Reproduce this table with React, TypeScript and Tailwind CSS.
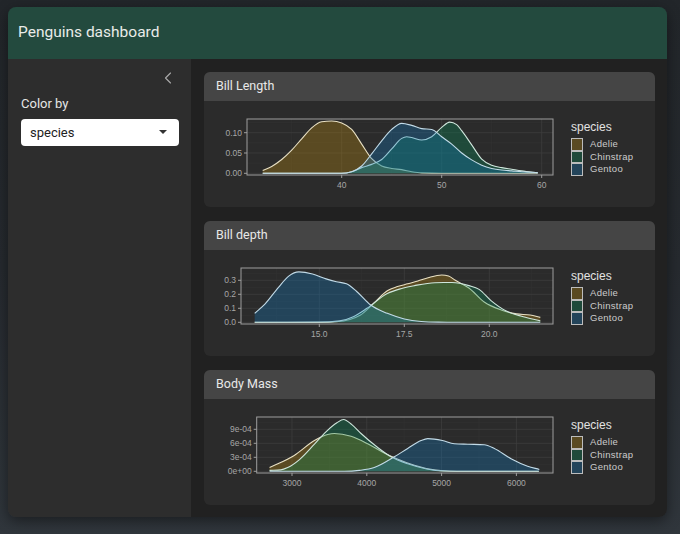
import React from "react";
import { ChevronLeft } from "lucide-react";

type Pt = [number, number];

const SPECIES = [
  { name: "Adelie", fill: "#c8930d", line: "#e8e0c4", key: "#5a4a22" },
  { name: "Chinstrap", fill: "#03935d", line: "#cfe6dc", key: "#1f4a3a" },
  { name: "Gentoo", fill: "#117fc8", line: "#c2dbe8", key: "#23445a" },
];

// monotone cubic through pixel points (no overshoot below the baseline)
function monotonePath(pts: Pt[]): string {
  const n = pts.length;
  const h: number[] = [];
  const s: number[] = [];
  for (let i = 0; i < n - 1; i++) {
    h.push(pts[i + 1][0] - pts[i][0]);
    s.push((pts[i + 1][1] - pts[i][1]) / h[i]);
  }
  const t: number[] = [];
  for (let i = 0; i < n; i++) {
    if (i === 0) t.push(s[0]);
    else if (i === n - 1) t.push(s[n - 2]);
    else {
      const s0 = s[i - 1];
      const s1 = s[i];
      if (s0 * s1 <= 0) t.push(0);
      else {
        const p = (s0 * h[i] + s1 * h[i - 1]) / (h[i - 1] + h[i]);
        t.push((Math.sign(s0) + Math.sign(s1)) * Math.min(Math.abs(s0), Math.abs(s1), 0.5 * Math.abs(p)));
      }
    }
  }
  let d = `M${pts[0][0].toFixed(2)},${pts[0][1].toFixed(2)}`;
  for (let i = 0; i < n - 1; i++) {
    const [x0, y0] = pts[i];
    const [x1, y1] = pts[i + 1];
    const k = h[i] / 3;
    d += ` C${(x0 + k).toFixed(2)},${(y0 + t[i] * k).toFixed(2)} ${(x1 - k).toFixed(2)},${(y1 - t[i + 1] * k).toFixed(2)} ${x1.toFixed(2)},${y1.toFixed(2)}`;
  }
  return d;
}

type PlotDef = {
  title: string;
  left: number;
  x0: number;
  xPx: number;
  xScale: number;
  yScale: number;
  xTicks: [number, string][];
  yTicks: [number, string][];
  xMinor: number[];
  yMinor: number[];
  curves: Pt[][];
};

const PLOTS: PlotDef[] = [
  {
    title: "Bill Length",
    left: 43,
    x0: 40,
    xPx: 137.7,
    xScale: 10,
    yScale: 406,
    xTicks: [[40, "40"], [50, "50"], [60, "60"]],
    yTicks: [[0, "0.00"], [0.05, "0.05"], [0.1, "0.10"]],
    xMinor: [35, 45, 55],
    yMinor: [0.025, 0.075, 0.125],
    curves: [
      [[32.1, 0.007], [33, 0.017], [34, 0.034], [35, 0.057], [36, 0.085], [37, 0.112], [38, 0.127], [39, 0.129], [40, 0.124], [41, 0.108], [42, 0.072], [43, 0.036], [44, 0.018], [45, 0.012], [46, 0.009], [47, 0.004], [48, 0.001], [50, 0], [59.6, 0]],
      [[32.1, 0], [40, 0], [41, 0.004], [42, 0.014], [43, 0.022], [44, 0.034], [45, 0.06], [46, 0.086], [46.5, 0.09], [47, 0.088], [48, 0.082], [49, 0.09], [50, 0.113], [50.8, 0.126], [51.5, 0.12], [52, 0.105], [53, 0.07], [54, 0.035], [55, 0.02], [56, 0.014], [57, 0.01], [58, 0.006], [59.6, 0.001]],
      [[32.1, 0], [40, 0], [41, 0.004], [42, 0.018], [43, 0.048], [44, 0.08], [45, 0.108], [46, 0.123], [47, 0.118], [48, 0.11], [49, 0.108], [50, 0.09], [51, 0.072], [52, 0.05], [53, 0.033], [54, 0.02], [55, 0.012], [56, 0.008], [57, 0.006], [58, 0.004], [59.6, 0.002]],
    ],
  },
  {
    title: "Bill depth",
    left: 37,
    x0: 15,
    xPx: 115.3,
    xScale: 34,
    yScale: 140,
    xTicks: [[15, "15.0"], [17.5, "17.5"], [20, "20.0"]],
    yTicks: [[0, "0.0"], [0.1, "0.1"], [0.2, "0.2"], [0.3, "0.3"]],
    xMinor: [13.75, 16.25, 18.75, 21.25],
    yMinor: [0.05, 0.15, 0.25, 0.35],
    curves: [
      [[13.1, 0], [15, 0], [15.5, 0.004], [15.9, 0.02], [16.2, 0.05], [16.6, 0.136], [17, 0.225], [17.3, 0.255], [17.6, 0.275], [17.9, 0.295], [18.2, 0.318], [18.6, 0.338], [18.8, 0.33], [19, 0.3], [19.4, 0.245], [19.85, 0.145], [20.35, 0.088], [20.8, 0.06], [21.2, 0.052], [21.5, 0.035]],
      [[13.1, 0], [15, 0.001], [15.6, 0.01], [16, 0.04], [16.4, 0.1], [17, 0.205], [17.4, 0.24], [17.8, 0.262], [18.4, 0.283], [18.9, 0.284], [19.4, 0.262], [19.7, 0.235], [20.05, 0.155], [20.5, 0.08], [21, 0.04], [21.5, 0.01]],
      [[13.1, 0.064], [13.4, 0.13], [13.8, 0.25], [14.1, 0.33], [14.4, 0.36], [14.8, 0.345], [15.2, 0.31], [15.5, 0.29], [15.8, 0.275], [16.1, 0.22], [16.5, 0.125], [17, 0.064], [17.5, 0.024], [18, 0.006], [18.5, 0.001], [19, 0], [21.5, 0]],
    ],
  },
  {
    title: "Body Mass",
    left: 52.7,
    x0: 3000,
    xPx: 88,
    xScale: 0.0748,
    yScale: 4.6667,
    xTicks: [[3000, "3000"], [4000, "4000"], [5000, "5000"], [6000, "6000"]],
    yTicks: [[0, "0e+00"], [3, "3e-04"], [6, "6e-04"], [9, "9e-04"]],
    xMinor: [3500, 4500, 5500],
    yMinor: [1.5, 4.5, 7.5, 10.5],
    curves: [
      [[2700, 0.8], [3030, 3.4], [3300, 6.6], [3477, 7.9], [3566, 8.1], [3790, 7.5], [4012, 5.9], [4213, 4.1], [4400, 2.7], [4636, 1.3], [4900, 0.3], [5100, 0.05], [5300, 0], [6300, 0]],
      [[2700, 0.2], [2850, 0.3], [2943, 0.8], [3100, 2.5], [3300, 5.8], [3450, 8.4], [3600, 10.4], [3690, 11.1], [3800, 10.0], [3923, 8.1], [4146, 5.1], [4324, 3.1], [4547, 1.6], [4800, 0.5], [5030, 0.05], [5200, 0], [6300, 0]],
      [[2700, 0], [3700, 0], [3900, 0.2], [4100, 0.8], [4368, 3.1], [4547, 4.9], [4725, 6.6], [4815, 7.0], [4900, 6.9], [5010, 6.6], [5170, 5.9], [5350, 5.8], [5570, 5.7], [5705, 4.9], [5928, 2.7], [6150, 1.1], [6306, 0.4]],
    ],
  },
];

const PANEL_RIGHT = 349;
const PANEL_TOP = 18;
const PANEL_BOTTOM = 74;
const ZERO_Y = 72.3;

function DensityPlot({ p }: { p: PlotDef }) {
  const toX = (v: number) => p.xPx + (v - p.x0) * p.xScale;
  const toY = (d: number) => ZERO_Y - d * p.yScale;
  const axisFont = { fontFamily: "'Liberation Sans', Arial, sans-serif", fontSize: 8.5 };
  const clipId = `clip-${p.title.replace(/\s/g, "")}`;

  return (
    <svg width={360} height={106} className="shrink-0">
      <defs>
        <clipPath id={clipId}>
          <rect x={p.left} y={PANEL_TOP} width={PANEL_RIGHT - p.left} height={PANEL_BOTTOM - PANEL_TOP} />
        </clipPath>
      </defs>
      <g clipPath={`url(#${clipId})`}>
        {p.xMinor.map((v) => (
          <line key={`xm${v}`} x1={toX(v)} x2={toX(v)} y1={PANEL_TOP} y2={PANEL_BOTTOM} stroke="#353535" strokeWidth={0.5} />
        ))}
        {p.yMinor.map((v) => (
          <line key={`ym${v}`} x1={p.left} x2={PANEL_RIGHT} y1={toY(v)} y2={toY(v)} stroke="#353535" strokeWidth={0.5} />
        ))}
        {p.xTicks.map(([v]) => (
          <line key={`xM${v}`} x1={toX(v)} x2={toX(v)} y1={PANEL_TOP} y2={PANEL_BOTTOM} stroke="#3e3e3e" strokeWidth={0.8} />
        ))}
        {p.yTicks.map(([v]) => (
          <line key={`yM${v}`} x1={p.left} x2={PANEL_RIGHT} y1={toY(v)} y2={toY(v)} stroke="#3e3e3e" strokeWidth={0.8} />
        ))}
        {p.curves.map((c, i) => {
          const pts: Pt[] = c.map(([v, d]) => [toX(v), toY(d)]);
          const line = monotonePath(pts);
          const first = pts[0];
          const last = pts[pts.length - 1];
          const area = `M${first[0]},${ZERO_Y} L${first[0]},${first[1]} ${line.slice(line.indexOf("C"))} L${last[0]},${ZERO_Y} Z`;
          return (
            <g key={i}>
              <path d={area} fill={SPECIES[i].fill} fillOpacity={0.3} />
              <path d={line} fill="none" stroke={SPECIES[i].line} strokeWidth={1.1} strokeLinejoin="round" />
            </g>
          );
        })}
      </g>
      <rect x={p.left} y={PANEL_TOP} width={PANEL_RIGHT - p.left} height={PANEL_BOTTOM - PANEL_TOP} fill="none" stroke="#9e9e9e" strokeWidth={1} />
      {p.yTicks.map(([v, label]) => (
        <g key={`yt${v}`}>
          <line x1={p.left - 3} x2={p.left} y1={toY(v)} y2={toY(v)} stroke="#9e9e9e" strokeWidth={1} />
          <text x={p.left - 5} y={toY(v) + 3} textAnchor="end" fill="#a6a6a6" style={axisFont}>
            {label}
          </text>
        </g>
      ))}
      {p.xTicks.map(([v, label]) => (
        <g key={`xt${v}`}>
          <line x1={toX(v)} x2={toX(v)} y1={PANEL_BOTTOM} y2={PANEL_BOTTOM + 3} stroke="#9e9e9e" strokeWidth={1} />
          <text x={toX(v)} y={87} textAnchor="middle" fill="#a6a6a6" style={axisFont}>
            {label}
          </text>
        </g>
      ))}
    </svg>
  );
}

function Legend() {
  return (
    <div className="ml-[7px] pt-[19px] font-['Liberation_Sans',Arial,sans-serif]">
      <div className="text-[12px] leading-[14px] text-[#e2e2e2]">species</div>
      <div className="mt-[4px] flex flex-col">
        {SPECIES.map((s) => (
          <div key={s.name} className="flex items-center h-[12.5px]">
            <div className="w-[12px] h-[12.5px] border border-[#bcbcbc]" style={{ backgroundColor: s.key }} />
            <span className="ml-[7px] text-[9.5px] tracking-[0.3px] text-[#cccccc]">{s.name}</span>
          </div>
        ))}
      </div>
    </div>
  );
}

function PlotCard({ p }: { p: PlotDef }) {
  return (
    <div className="rounded-[6px] overflow-hidden bg-[#2b2b2b] shrink-0">
      <div className="h-[29px] bg-[#454545] flex items-center px-[12px] text-[12.5px] text-[#e8e8e8]">{p.title}</div>
      <div className="flex h-[106px]">
        <DensityPlot p={p} />
        <Legend />
      </div>
    </div>
  );
}

export default function App() {
  return (
    <div className="w-[680px] h-[534px] bg-gradient-to-b from-[#22262a] via-[#262a2f] to-[#30363c] pt-[7px] pl-[8px] pr-[13px] font-['Roboto','Noto_Sans',sans-serif] overflow-hidden">
      <div className="h-[510px] rounded-[8px] overflow-hidden flex flex-col shadow-[0_4px_14px_rgba(0,0,0,0.45)]">
        <div className="h-[52px] shrink-0 bg-[#234a3e] flex items-center px-[10px] text-[15.5px] text-[#e9ece9]">
          Penguins dashboard
        </div>
        <div className="flex flex-1 min-h-0">
          <aside className="w-[183px] shrink-0 bg-[#2d2d2d] pl-[13px] pr-[12px]">
            <div className="flex justify-end pt-[9px] pr-[1px]">
              <ChevronLeft size={20} strokeWidth={1.4} className="text-[#a8a8a8]" />
            </div>
            <div className="mt-[6px] text-[13px] leading-[20px] text-[#e6e6e6]">Color by</div>
            <div className="mt-[5px] h-[26.5px] bg-white rounded-[4px] flex items-center justify-between pl-[9px] pr-[12px]">
              <span className="text-[13px] text-[#222]">species</span>
              <span className="w-0 h-0 border-l-[4px] border-r-[4px] border-t-[4px] border-l-transparent border-r-transparent border-t-[#333]" />
            </div>
          </aside>
          <main className="flex-1 bg-[#212121] pt-[13px] pl-[13px] pr-[12px] flex flex-col gap-[14px]">
            {PLOTS.map((p) => (
              <PlotCard key={p.title} p={p} />
            ))}
          </main>
        </div>
      </div>
    </div>
  );
}
